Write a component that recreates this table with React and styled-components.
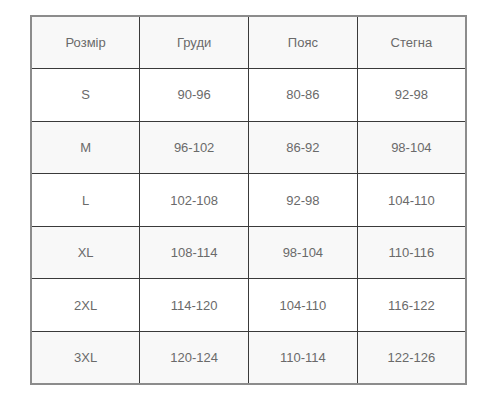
import React from 'react';
import styled, { createGlobalStyle } from 'styled-components';

const GlobalStyle = createGlobalStyle`
  body {
    margin: 0;
    background: #ffffff;
    font-family: "Liberation Sans", Arial, sans-serif;
  }
`;

const Page = styled.div`
  padding: 15px 0 0 30px;
`;

const Table = styled.table`
  width: 437px;
  border-collapse: collapse;
  table-layout: fixed;
  border: 2px solid #8c8c8c;
`;

const Row = styled.tr`
  height: 52.6px;
  background-color: ${(props) => (props.$shaded ? '#f8f8f8' : '#ffffff')};
`;

const Cell = styled.td`
  border: 1px solid #3a3a3a;
  text-align: center;
  vertical-align: middle;
  font-size: 13px;
  color: #6a6a6a;
  padding: 0;
`;

const HeadCell = styled(Cell).attrs({ as: 'th' })`
  font-weight: normal;
`;

const headers = ['Розмір', 'Груди', 'Пояс', 'Стегна'];

const sizes = [
  ['S', '90-96', '80-86', '92-98'],
  ['M', '96-102', '86-92', '98-104'],
  ['L', '102-108', '92-98', '104-110'],
  ['XL', '108-114', '98-104', '110-116'],
  ['2XL', '114-120', '104-110', '116-122'],
  ['3XL', '120-124', '110-114', '122-126'],
];

const App = () => {
  return (
    <Page>
      <GlobalStyle />
      <Table>
        <thead>
          <Row $shaded>
            {headers.map((h) => (
              <HeadCell key={h}>{h}</HeadCell>
            ))}
          </Row>
        </thead>
        <tbody>
          {sizes.map((row, i) => (
            <Row key={row[0]} $shaded={i % 2 === 1}>
              {row.map((v, j) => (
                <Cell key={j}>{v}</Cell>
              ))}
            </Row>
          ))}
        </tbody>
      </Table>
    </Page>
  );
};

export default App;
